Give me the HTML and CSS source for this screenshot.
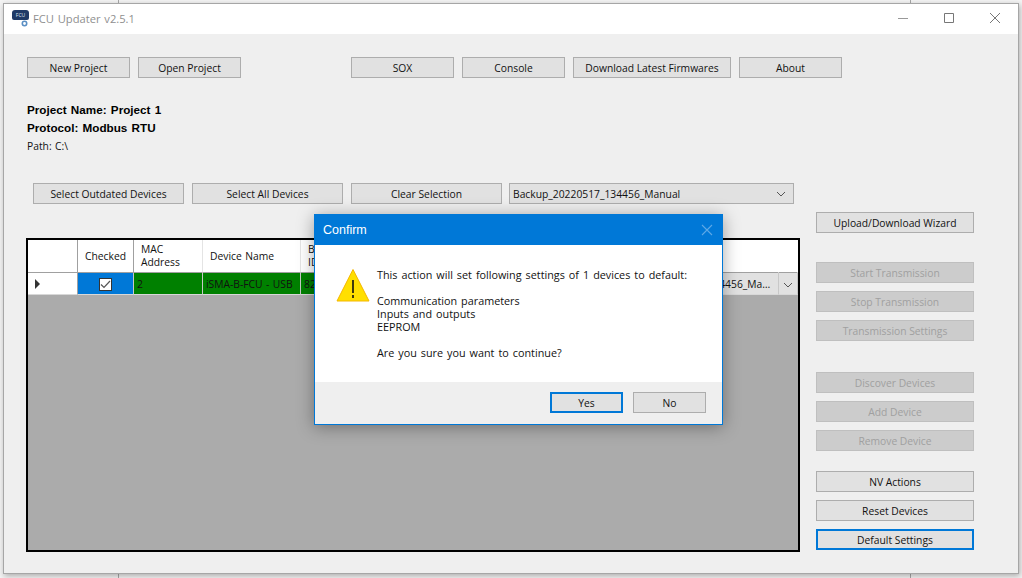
FILE: index.html
```html
<!DOCTYPE html>
<html lang="en">
<head>
    <meta charset="UTF-8">
    <meta name="viewport" content="width=device-width, initial-scale=1.0">
    <title>FCU Updater v2.5.1</title>
    <link rel="stylesheet" href="styles.css">
</head>
<body>
    <main class="window">
        <header class="titlebar">
            <svg class="app-icon" width="18" height="18" viewBox="0 0 18 18">
                <path d="M3 1h11a3 3 0 0 1 3 3v5a2 2 0 0 1-2 2H2a2 2 0 0 1-2-2V4a3 3 0 0 1 3-3z" fill="#1f3a66"/>
                <text x="8.5" y="7.5" font-size="5" text-anchor="middle" fill="#dfe6f0">FCU</text>
                <circle cx="12.5" cy="14.5" r="2.2" fill="none" stroke="#5b8fc4" stroke-width="1.6"/>
            </svg>
            <span class="app-title">FCU Updater v2.5.1</span>
            <div class="window-controls">
                <svg width="12" height="12" viewBox="0 0 12 12"><path d="M1 6.5h10" stroke="#999" fill="none"/></svg>
                <svg width="12" height="12" viewBox="0 0 12 12"><path d="M1.5 1.5h9v9h-9z" stroke="#777" fill="none"/></svg>
                <svg width="12" height="12" viewBox="0 0 12 12"><path d="M1 1l10 10M11 1L1 11" stroke="#777" fill="none"/></svg>
            </div>
        </header>

        <div class="content">
            <nav class="top-bar">
                <div class="btn-group">
                    <button class="btn">New Project</button>
                    <button class="btn">Open Project</button>
                </div>
                <div class="btn-group tools">
                    <button class="btn">SOX</button>
                    <button class="btn">Console</button>
                    <button class="btn btn-wide">Download Latest Firmwares</button>
                    <button class="btn">About</button>
                </div>
            </nav>

            <section class="project-info">
                <p class="strong">Project Name: Project 1</p>
                <p class="strong">Protocol: Modbus RTU</p>
                <p class="path">Path: C:\</p>
            </section>

            <div class="workspace">
                <div class="left-pane">
                    <div class="selection-bar">
                        <button class="btn btn-select">Select Outdated Devices</button>
                        <button class="btn btn-select">Select All Devices</button>
                        <button class="btn btn-select">Clear Selection</button>
                        <div class="combo">
                            <span>Backup_20220517_134456_Manual</span>
                            <svg width="10" height="6" viewBox="0 0 10 6"><path d="M1 1l4 4 4-4" stroke="#555" fill="none"/></svg>
                        </div>
                    </div>

                    <div class="grid-view">
                        <table class="devices">
                            <colgroup>
                                <col class="col-head"><col class="col-checked"><col class="col-mac"><col class="col-name"><col class="col-boot"><col class="col-fill"><col class="col-backup"><col class="col-drop">
                            </colgroup>
                            <thead>
                                <tr>
                                    <th class="row-head"></th>
                                    <th class="center">Checked</th>
                                    <th>MAC<br>Address</th>
                                    <th>Device Name</th>
                                    <th>Boot<br>ID</th>
                                    <th></th>
                                    <th></th>
                                    <th></th>
                                </tr>
                            </thead>
                            <tbody>
                                <tr>
                                    <td class="row-head"><span class="row-arrow"></span></td>
                                    <td class="cell-selected">
                                        <span class="check">
                                            <svg width="11" height="9" viewBox="0 0 11 9"><path d="M1 4.5l3 3 6-6.5" stroke="#555" stroke-width="1.2" fill="none"/></svg>
                                        </span>
                                    </td>
                                    <td class="cell-ok">2</td>
                                    <td class="cell-ok name">iSMA-B-FCU - USB</td>
                                    <td class="cell-ok">82</td>
                                    <td class="cell-ok"></td>
                                    <td class="cell-combo"><span class="clip">Backup_20220517_134456_Manual</span></td>
                                    <td class="cell-combo">
                                        <svg width="10" height="6" viewBox="0 0 10 6"><path d="M1 1l4 4 4-4" stroke="#555" fill="none"/></svg>
                                    </td>
                                </tr>
                            </tbody>
                        </table>
                    </div>
                </div>

                <aside class="actions">
                    <button class="btn btn-side">Upload/Download Wizard</button>
                    <div class="action-group">
                        <button class="btn btn-side" disabled>Start Transmission</button>
                        <button class="btn btn-side" disabled>Stop Transmission</button>
                        <button class="btn btn-side" disabled>Transmission Settings</button>
                    </div>
                    <div class="action-group">
                        <button class="btn btn-side" disabled>Discover Devices</button>
                        <button class="btn btn-side" disabled>Add Device</button>
                        <button class="btn btn-side" disabled>Remove Device</button>
                    </div>
                    <div class="action-group tight">
                        <button class="btn btn-side">NV Actions</button>
                        <button class="btn btn-side">Reset Devices</button>
                        <button class="btn btn-side btn-focus">Default Settings</button>
                    </div>
                </aside>
            </div>
        </div>
    </main>

    <div class="dialog" role="dialog">
        <div class="dialog-title">
            <span>Confirm</span>
            <svg width="12" height="12" viewBox="0 0 12 12"><path d="M1 1l10 10M11 1L1 11" stroke="#5da9e6" stroke-width="1.1" fill="none"/></svg>
        </div>
        <div class="dialog-body">
            <svg class="warn-icon" width="34" height="34" viewBox="0 0 34 34">
                <path d="M17 1.5L33 33H1z" fill="#ffdf00" stroke="#f5b700" stroke-width="1"/>
                <path d="M16.2 12h1.6v13h-1.6zM16.2 27h1.6v3h-1.6z" fill="#111"/>
            </svg>
            <div class="dialog-text">
                <p>This action will set following settings of 1 devices to default:</p>
                <p>Communication parameters<br>Inputs and outputs<br>EEPROM</p>
                <p>Are you sure you want to continue?</p>
            </div>
        </div>
        <div class="dialog-footer">
            <button class="btn btn-dialog btn-focus">Yes</button>
            <button class="btn btn-dialog">No</button>
        </div>
    </div>
</body>
</html>
```

FILE: styles.css
```css
* {
    margin: 0;
    box-sizing: border-box;
}
html, body {
    width: 100%;
    height: 100%;
}
body {
    position: relative;
    overflow: hidden;
    font-family: "Open Sans", "Liberation Sans", sans-serif;
    font-size: 10.3px;
    word-spacing: 0.8px;
    color: #111;
    background-color: #f4f4f4;
    background-image:
        linear-gradient(#a8a8a8, #a8a8a8),
        linear-gradient(#a8a8a8, #a8a8a8);
    background-size: 1px 100%;
    background-position: 118px 0, 910px 0;
    background-repeat: no-repeat;
}
.window {
    display: flex;
    flex-direction: column;
    width: 1016px;
    height: 571px;
    margin: 3px 0 0 3px;
    border: 1px solid #a6a6a6;
    background: #efefef;
    box-shadow: 1px 2px 6px rgba(0, 0, 0, 0.3);
}
.titlebar {
    display: flex;
    align-items: center;
    flex: 0 0 30px;
    padding: 0 0 2px 8px;
    background: white;
}
.app-icon {
    margin-top: -1px;
}
.app-title {
    margin-left: 3px;
    font-size: 11.2px;
    color: #8f8f8f;
}
.window-controls {
    display: flex;
    gap: 34px;
    margin-left: auto;
    padding-right: 17px;
}
.content {
    flex: 1;
    padding: 23px 0 0 23px;
}
.top-bar {
    display: flex;
}
.btn-group {
    display: flex;
    gap: 8px;
}
.tools {
    margin-left: 110px;
}
.btn {
    width: 103px;
    height: 21px;
    padding: 0;
    border: 1px solid #adadad;
    background: #e1e1e1;
    font: inherit;
    color: #111;
}
.btn-wide {
    width: 158px;
}
.btn:disabled {
    border-color: #bfbfbf;
    background: #cccccc;
    color: #a0a0a0;
}
.btn-focus {
    border: 2px solid #0078d7;
}
.project-info {
    display: flex;
    flex-direction: column;
    gap: 5px;
    margin-top: 25px;
    line-height: 13px;
}
.strong {
    font-family: "Liberation Sans", sans-serif;
    font-size: 11.7px;
    font-weight: bold;
    word-spacing: 1px;
    color: black;
}
.path {
    margin-top: 1px;
}
.workspace {
    display: flex;
    margin-top: 30px;
}
.left-pane {
    width: 773px;
}
.selection-bar {
    display: flex;
    gap: 8px;
    margin-left: 6px;
}
.btn-select {
    width: 151px;
}
.combo {
    display: flex;
    align-items: center;
    justify-content: space-between;
    width: 285px;
    height: 21px;
    margin-left: -1px;
    padding: 0 7px 0 3px;
    border: 1px solid #adadad;
    background: #e1e1e1;
}
.grid-view {
    height: 314px;
    margin: 34px 0 0 -1px;
    border: 2px solid black;
    background: #ababab;
}
.devices {
    width: 100%;
    table-layout: fixed;
    border-collapse: separate;
    border-spacing: 0;
}
.col-head { width: 50px; }
.col-checked { width: 56px; }
.col-mac { width: 69px; }
.col-name { width: 98px; }
.col-boot { width: 60px; }
.col-backup { width: 165px; }
.col-drop { width: 19px; }
.devices th {
    height: 33px;
    padding: 0 0 0 7px;
    border-right: 1px solid #e4e4e4;
    border-bottom: 1px solid #a0a0a0;
    background: white;
    font-weight: normal;
    line-height: 13px;
    text-align: left;
}
.devices th:nth-last-child(-n+3) {
    border-right-color: white;
}
.devices th.center {
    padding: 0;
    text-align: center;
}
.devices th.row-head, .devices th.center {
    border-right-color: #a0a0a0;
}
.devices td {
    height: 22px;
    padding: 0 0 0 3px;
    border-right: 1px solid #c8c8c8;
    border-bottom: 1px solid #d8d8d8;
    white-space: nowrap;
    overflow: hidden;
}
.devices td.row-head {
    padding-left: 7px;
    background: white;
    border-right-color: #a0a0a0;
}
.row-arrow {
    display: block;
    width: 0;
    height: 0;
    border-style: solid;
    border-width: 5px 0 5px 5px;
    border-color: transparent transparent transparent #333;
}
.devices td.cell-selected {
    padding: 0;
    background: #0078d7;
    text-align: center;
}
.check {
    display: inline-flex;
    align-items: center;
    justify-content: center;
    width: 13px;
    height: 13px;
    border: 1px solid #333;
    background: white;
    vertical-align: middle;
}
.cell-ok {
    background: green;
}
.devices td.cell-combo {
    padding: 0 2px;
    background: #e1e1e1;
    text-align: center;
}
.clip {
    display: block;
    overflow: hidden;
    text-overflow: ellipsis;
    text-align: left;
}
.actions {
    display: flex;
    flex-direction: column;
    width: 158px;
    margin-left: 16px;
    padding-top: 29px;
}
.action-group {
    display: flex;
    flex-direction: column;
    gap: 8px;
    margin-top: 29px;
}
.action-group + .action-group {
    margin-top: 31px;
}
.action-group.tight {
    margin-top: 20px;
}
.btn-side {
    width: 158px;
}
.dialog {
    position: absolute;
    top: 214px;
    left: 314px;
    display: flex;
    flex-direction: column;
    width: 409px;
    height: 211px;
    border: 1px solid #0078d7;
    background: white;
    box-shadow: 0 2px 16px rgba(0, 0, 0, 0.35);
}
.dialog-title {
    display: flex;
    align-items: center;
    justify-content: space-between;
    flex: 0 0 30px;
    padding: 0 9px 0 8px;
    background: #0078d7;
    color: white;
    font-family: "Liberation Sans", sans-serif;
    font-size: 12.5px;
}
.dialog-body {
    display: flex;
    flex: 1;
    padding: 22px 0 0 21px;
}
.warn-icon {
    margin-top: 1px;
}
.dialog-text {
    display: flex;
    flex-direction: column;
    gap: 13px;
    margin-left: 7px;
    margin-top: 1px;
    line-height: 13px;
    font-size: 10.8px;
    word-spacing: 1.2px;
    color: #111;
}
.dialog-footer {
    display: flex;
    justify-content: flex-end;
    gap: 10px;
    flex: 0 0 42px;
    padding: 10px 16px 0 0;
    background: #efefef;
}
.btn-dialog {
    width: 73px;
}
```
